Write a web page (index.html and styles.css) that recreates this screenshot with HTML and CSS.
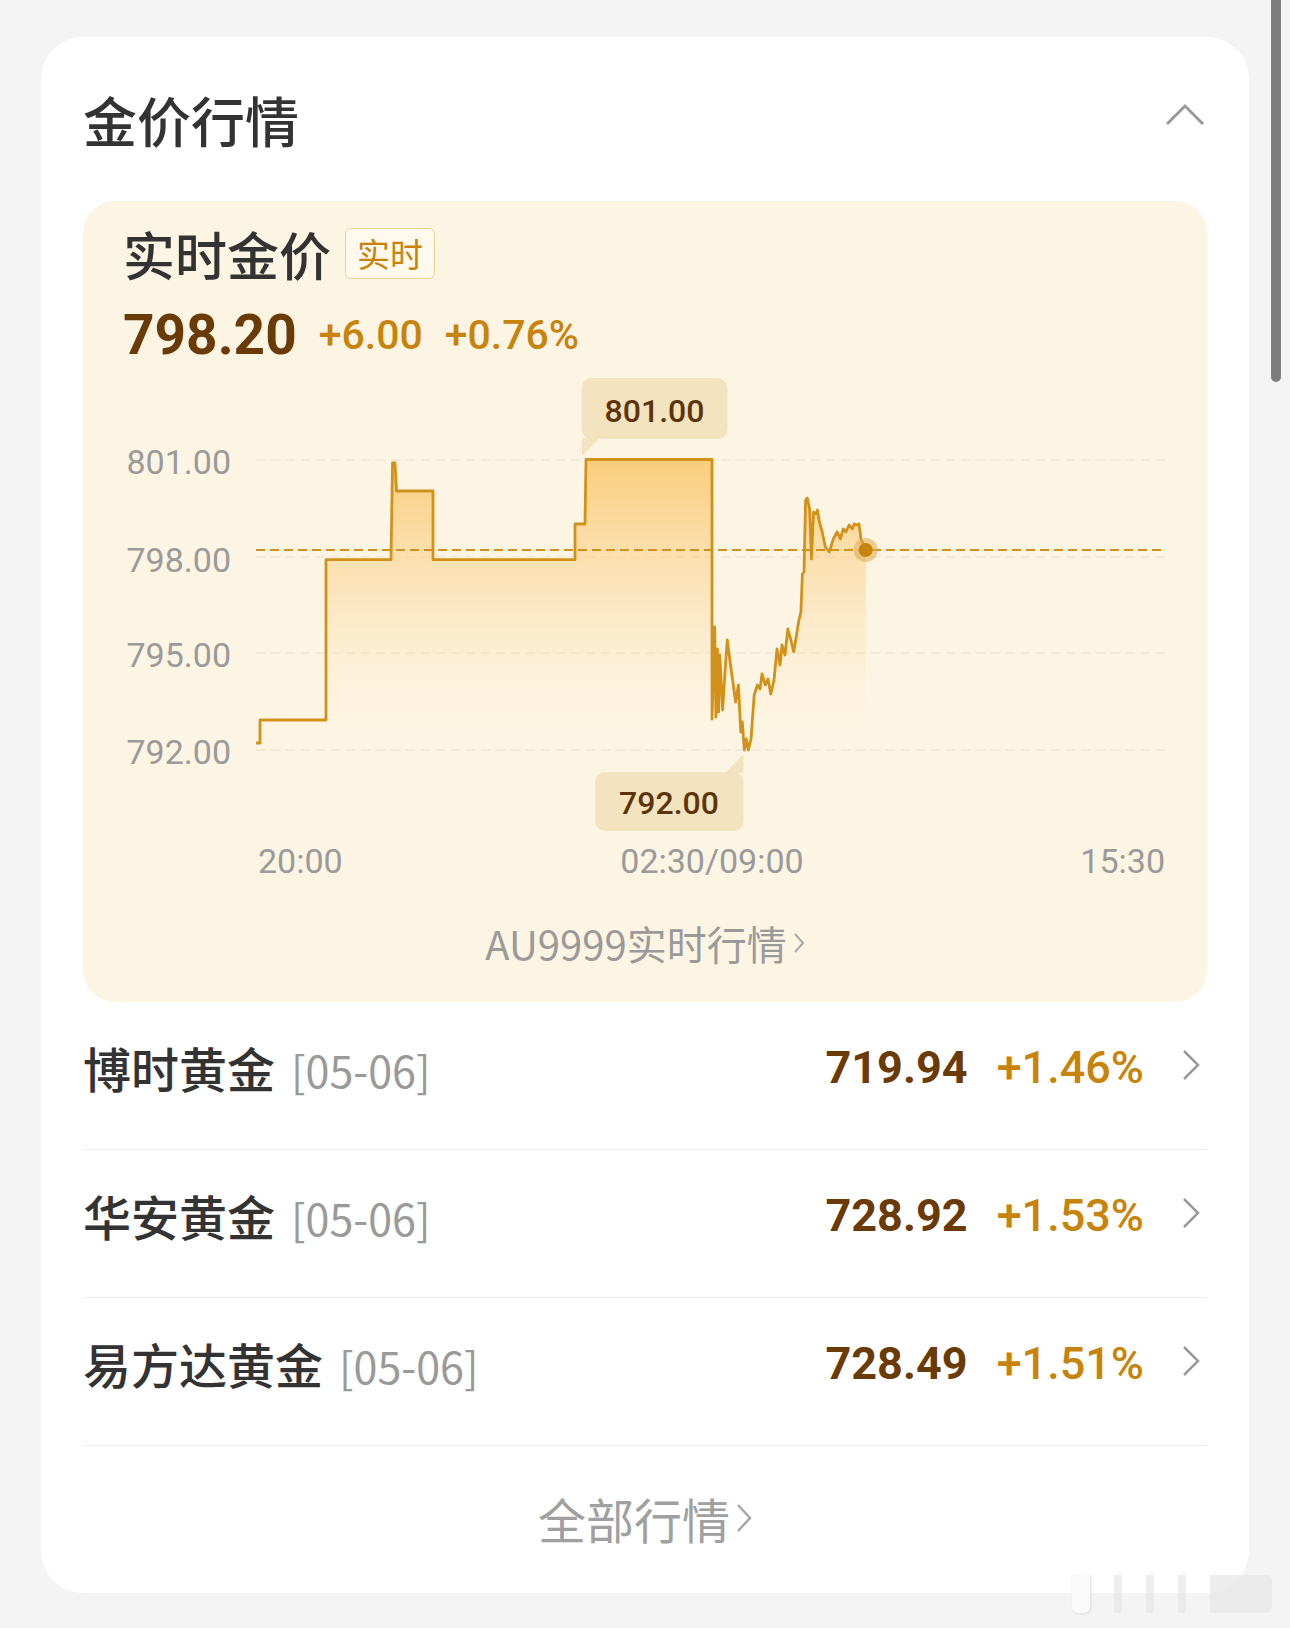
FILE: index.html
```html
<!DOCTYPE html>
<html lang="zh-CN">
<head>
    <meta charset="UTF-8">
    <meta name="viewport" content="width=device-width, initial-scale=1.0">
    <title>金价行情</title>
    <link rel="stylesheet" href="styles.css">
</head>
<body>

    <!-- 金价行情卡片 -->
    <div class="card">
        <div class="card-head">
            <h1 class="card-title">金价行情</h1>
            <svg class="fold-icon" viewBox="0 0 40 24"><polyline points="2,22 20,4 38,22"/></svg>
        </div>

        <!-- 实时金价 -->
        <div class="live-panel">
            <div class="live-head">
                <span class="live-title">实时金价</span>
                <span class="live-tag">实时</span>
            </div>
            <div class="live-price">
                <span class="price-main">798.20</span>
                <span class="price-up">+6.00</span>
                <span class="price-up">+0.76%</span>
            </div>

            <svg class="chart" viewBox="83 365 1125 530">
                <defs>
                    <linearGradient id="goldFill" gradientUnits="userSpaceOnUse" x1="0" y1="458" x2="0" y2="760">
                        <stop offset="0" stop-color="#f9c462" stop-opacity="0.8"/>
                        <stop offset="0.45" stop-color="#fad08a" stop-opacity="0.42"/>
                        <stop offset="1" stop-color="#fdf5e4" stop-opacity="0"/>
                    </linearGradient>
                </defs>

                <!-- 网格线 -->
                <line class="grid" x1="256" y1="458" x2="1165" y2="458"/>
                <line class="grid" x1="256" y1="555" x2="1165" y2="555"/>
                <line class="grid" x1="256" y1="651" x2="1165" y2="651"/>
                <line class="grid" x1="256" y1="748" x2="1165" y2="748"/>

                <text class="axis-y" x="231" y="472">801.00</text>
                <text class="axis-y" x="231" y="570">798.00</text>
                <text class="axis-y" x="231" y="665">795.00</text>
                <text class="axis-y" x="231" y="762">792.00</text>

                <!-- 分时走势 -->
                <polygon class="area" points="256,741 260,741 260,718 326,718 326,557.7 391,557.7 392.5,461 395,461 396.5,489 433,489 433,557.7 575,557.7 575,522 585,522 586,457.5 712,457.5 712,717 714.7,625 715.9,715 717.4,647 718.6,710 719.8,653 722.6,708 725,670 727.3,638 730.5,663 733.3,683 735.6,700 738.4,683 740.8,730 742.3,720 744.3,748 746.3,737 748.3,748 751,737 754.2,693 757.4,683 760,687 762,672 765.3,683 768,677 770.8,692 774,678 777,647 780,663 782,643 785,653 787.8,627 790.6,637 793.7,650 796.5,633 798.9,618 800.9,610 802.4,572 804,570 805.6,498 807.2,496 809.6,507 811.5,557 813.5,510 815.9,512 817.5,508 819.4,520 822.2,530 825.4,545 829.3,550 833.3,537 837.2,530 840.4,537 843.2,527 845.9,530 849.1,523 852.3,527 854.2,522 857,523 859,522 861,537 865.7,548 865.7,760 256,760"/>
                <polyline class="trend" points="256,741 260,741 260,718 326,718 326,557.7 391,557.7 392.5,461 395,461 396.5,489 433,489 433,557.7 575,557.7 575,522 585,522 586,457.5 712,457.5 712,717 714.7,625 715.9,715 717.4,647 718.6,710 719.8,653 722.6,708 725,670 727.3,638 730.5,663 733.3,683 735.6,700 738.4,683 740.8,730 742.3,720 744.3,748 746.3,737 748.3,748 751,737 754.2,693 757.4,683 760,687 762,672 765.3,683 768,677 770.8,692 774,678 777,647 780,663 782,643 785,653 787.8,627 790.6,637 793.7,650 796.5,633 798.9,618 800.9,610 802.4,572 804,570 805.6,498 807.2,496 809.6,507 811.5,557 813.5,510 815.9,512 817.5,508 819.4,520 822.2,530 825.4,545 829.3,550 833.3,537 837.2,530 840.4,537 843.2,527 845.9,530 849.1,523 852.3,527 854.2,522 857,523 859,522 861,537 865.7,548"/>

                <line class="now-line" x1="256" y1="548" x2="1165" y2="548"/>
                <circle class="dot-halo" cx="865.7" cy="548" r="12"/>
                <circle class="dot" cx="865.7" cy="548" r="7"/>

                <!-- 最高 / 最低 -->
                <polygon class="tip-bg" points="582,436 600,436 582,454"/>
                <rect class="tip-bg" x="581.5" y="376" width="146" height="61" rx="10"/>
                <text class="tip-text" x="654.5" y="420">801.00</text>

                <polygon class="tip-bg" points="743.5,771 743.5,752 725,771"/>
                <rect class="tip-bg" x="595" y="770" width="148.5" height="59" rx="10"/>
                <text class="tip-text" x="669" y="812">792.00</text>

                <text class="axis-x" x="258" y="871">20:00</text>
                <text class="axis-x mid" x="712" y="871">02:30/09:00</text>
                <text class="axis-x end" x="1165" y="871">15:30</text>
            </svg>

            <a class="live-link" href="#">AU9999实时行情<svg class="link-arrow" viewBox="0 0 12 24"><polyline points="2,3 10,12 2,21"/></svg></a>
        </div>

        <!-- 黄金基金 -->
        <ul class="fund-list">
            <li class="fund-row">
                <div class="fund-name">博时黄金<span class="fund-date">[05-06]</span></div>
                <div class="fund-value">
                    <span class="fund-price">719.94</span>
                    <span class="fund-rate">+1.46%</span>
                    <svg class="row-arrow" viewBox="0 0 20 32"><polyline points="3,2 17,16 3,30"/></svg>
                </div>
            </li>
            <li class="fund-row">
                <div class="fund-name">华安黄金<span class="fund-date">[05-06]</span></div>
                <div class="fund-value">
                    <span class="fund-price">728.92</span>
                    <span class="fund-rate">+1.53%</span>
                    <svg class="row-arrow" viewBox="0 0 20 32"><polyline points="3,2 17,16 3,30"/></svg>
                </div>
            </li>
            <li class="fund-row">
                <div class="fund-name">易方达黄金<span class="fund-date">[05-06]</span></div>
                <div class="fund-value">
                    <span class="fund-price">728.49</span>
                    <span class="fund-rate">+1.51%</span>
                    <svg class="row-arrow" viewBox="0 0 20 32"><polyline points="3,2 17,16 3,30"/></svg>
                </div>
            </li>
        </ul>

        <a class="all-link" href="#">全部行情<svg class="all-arrow" viewBox="0 0 16 32"><polyline points="2,3 14,16 2,29"/></svg></a>
    </div>

    <div class="scroll-thumb"></div>
    <div class="watermark"><i class="bar-white"></i><i></i><i></i><i></i><i class="wide"></i></div>

</body>
</html>
```

FILE: styles.css
```css
body {
    margin: 0;
    padding: 37px 41px;
    background: #f4f4f4;
    font-family: "Noto Sans CJK SC", "Noto Sans", sans-serif;
    color: #333;
    position: relative;
}

/* 数字字体 */
.price-main,
.price-up,
.fund-price,
.fund-rate,
.chart text {
    font-family: Roboto, "Noto Sans CJK SC", sans-serif;
}

/* 卡片 */
.card {
    background: #fff;
    border-radius: 42px;
    padding: 0 42px;
}
.card-head {
    height: 162px;
    display: flex;
    justify-content: space-between;
    align-items: center;
    padding-top: 2px;
}
.card-title {
    margin: 0;
    font-size: 54px;
    font-weight: 500;
    line-height: 1.2;
    color: #333;
}
.fold-icon {
    width: 40px;
    height: 24px;
    margin: 0 2px 12px 0;
    fill: none;
    stroke: #9a9a9a;
    stroke-width: 3;
}

/* 实时金价 */
.live-panel {
    background: #fdf5e4;
    border-radius: 32px;
    padding: 22px 0 34px;
}
.live-head {
    height: 60px;
    display: flex;
    align-items: center;
    padding-left: 40px;
}
.live-title {
    font-size: 52px;
    font-weight: 500;
    color: #333;
}
.live-tag {
    margin-left: 14px;
    height: 49px;
    padding: 0 11px;
    border: 1px solid #ecd196;
    border-radius: 6px;
    background: #fff9ee;
    color: #c7830a;
    font-size: 33px;
    line-height: 49px;
}
.live-price {
    height: 64px;
    margin-top: 20px;
    display: flex;
    align-items: center;
    padding-left: 40px;
}
.price-main {
    font-size: 55px;
    font-weight: 700;
    color: #6a3a07;
    margin-right: 22px;
}
.price-up {
    font-size: 41px;
    font-weight: 500;
    color: #c7830a;
    margin-right: 22px;
}

/* 走势图 */
.chart {
    display: block;
    width: 1125px;
    height: 530px;
}
.chart .grid {
    stroke: #f1e6d0;
    stroke-width: 1.5;
    stroke-dasharray: 9 6;
}
.chart .area {
    fill: url(#goldFill);
}
.chart .trend {
    fill: none;
    stroke: #d2921a;
    stroke-width: 2.8;
    stroke-linejoin: round;
}
.chart .now-line {
    stroke: #d2921a;
    stroke-width: 2;
    stroke-dasharray: 9 5;
}
.chart .dot-halo {
    fill: #dcab50;
    opacity: 0.55;
}
.chart .dot {
    fill: #c7830a;
}
.chart .tip-bg {
    fill: #f4e3bf;
}
.axis-y {
    font-size: 34px;
    fill: #9a9a9a;
    text-anchor: end;
}
.axis-x {
    font-size: 34px;
    fill: #9a9a9a;
}
.axis-x.mid {
    text-anchor: middle;
}
.axis-x.end {
    text-anchor: end;
}
.tip-text {
    font-size: 32px;
    font-weight: 500;
    fill: #5c3409;
    text-anchor: middle;
}

.live-link {
    display: flex;
    justify-content: center;
    align-items: center;
    height: 50px;
    margin-top: 21px;
    font-size: 40px;
    color: #9a9a9a;
    text-decoration: none;
}
.link-arrow {
    width: 12px;
    height: 24px;
    margin-left: 6px;
    fill: none;
    stroke: #a8a8a8;
    stroke-width: 2;
}

/* 基金列表 */
.fund-list {
    list-style: none;
    margin: 0;
    padding: 0;
}
.fund-row {
    height: 130px;
    padding-bottom: 17px;
    border-bottom: 1.5px solid #eeeeee;
    display: flex;
    justify-content: space-between;
    align-items: center;
}
.fund-name {
    display: flex;
    align-items: baseline;
    font-size: 48px;
    font-weight: 500;
    color: #333;
}
.fund-date {
    margin-left: 16px;
    font-size: 43px;
    font-weight: 400;
    color: #9a9a9a;
}
.fund-value {
    display: flex;
    align-items: center;
}
.fund-price {
    font-size: 45px;
    font-weight: 700;
    color: #6a3a07;
}
.fund-rate {
    margin-left: 29px;
    font-size: 45px;
    font-weight: 500;
    color: #c7830a;
}
.row-arrow {
    width: 20px;
    height: 32px;
    margin: 0 6px 4px 37px;
    fill: none;
    stroke: #9a9a9a;
    stroke-width: 2.5;
}

.all-link {
    display: flex;
    justify-content: center;
    align-items: center;
    height: 147px;
    padding-bottom: 4px;
    box-sizing: border-box;
    font-size: 48px;
    color: #a0a0a0;
    text-decoration: none;
}
.all-arrow {
    width: 16px;
    height: 32px;
    margin-left: 6px;
    fill: none;
    stroke: #a8a8a8;
    stroke-width: 2.5;
}

/* 滚动条 与 角标 */
.scroll-thumb {
    position: absolute;
    top: 0;
    left: 1271px;
    width: 10px;
    height: 382px;
    border-radius: 0 0 5px 5px;
    background: #7d7d7d;
}
.watermark {
    position: absolute;
    left: 1072px;
    top: 1575px;
    display: flex;
    gap: 24px;
}
.watermark i {
    width: 8px;
    height: 38px;
    background: #e6e6e6;
    opacity: 0.7;
}
.watermark i.bar-white {
    width: 18px;
    background: #fafafa;
    border-radius: 0 0 6px 6px;
    box-shadow: 1px 1px 3px #dddddd;
    opacity: 1;
}
.watermark i.wide {
    width: 62px;
    border-radius: 0 6px 6px 0;
}
```
